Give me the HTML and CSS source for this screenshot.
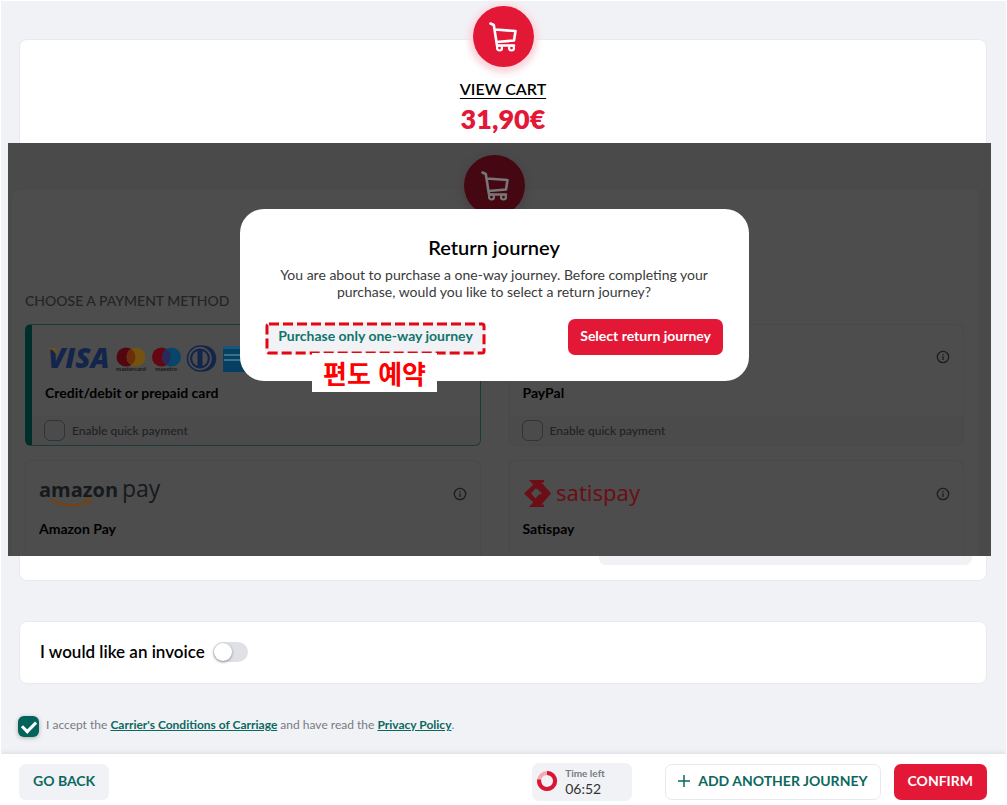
FILE: index.html
```html
<!DOCTYPE html>
<html lang="en">
<head>
<meta charset="utf-8">
<title>Payment</title>
<link rel="stylesheet" href="styles.css">
</head>
<body>
<svg class="defs" width="0" height="0" aria-hidden="true">
  <symbol id="cart" viewBox="0 0 28 30">
    <path d="M1.500 1.500 4.800 3 8 23.500H25M6 7.500 26.500 9 25 18.500 7.500 20" fill="none" stroke="currentColor" stroke-width="2.600" stroke-linecap="round" stroke-linejoin="round"/>
    <circle cx="10.500" cy="26" r="2.500" class="wheel" stroke="currentColor" stroke-width="2.200"/>
    <circle cx="22.500" cy="26" r="2.500" class="wheel" stroke="currentColor" stroke-width="2.200"/>
  </symbol>
  <symbol id="info" viewBox="0 0 14 14">
    <circle cx="7" cy="7" r="5.700" fill="none" stroke="currentColor" stroke-width="1.300"/>
    <path d="M7 6.200V10M7 4v1.200" stroke="currentColor" stroke-width="1.300"/>
  </symbol>
</svg>
<div class="page">
  <main class="content">
    <section class="card cart-card">
      <div class="cart-summary">
        <span class="cart-badge"><svg width="28" height="30"><use href="#cart"/></svg></span>
        <a class="view-cart" href="#">VIEW CART</a>
        <strong class="total">31,90€</strong>
      </div>
      <div class="dimmed">
        <div class="panel">
          <span class="cart-badge dim-badge"><svg width="28" height="30"><use href="#cart"/></svg></span>
          <h2 class="choose">CHOOSE A PAYMENT METHOD</h2>
          <div class="methods">
            <article class="method selected">
              <div class="logo-row">
                <svg class="logos" width="216" height="28" viewBox="0 0 216 28">
                  <text x="3" y="23" class="visa">VISA</text>
                  <path d="M2 3H11L13 10 10 8C8 5 6 4 2 4Z" fill="#6b501c"/>
                  <circle cx="81" cy="12" r="9.500" fill="#520612"/><circle cx="91" cy="12" r="9.500" fill="#75520f"/>
                  <path d="M86 4a9.500 9.500 0 0 1 0 16 9.500 9.500 0 0 1 0-16Z" fill="#6b2d0c"/>
                  <text x="86" y="26" class="tiny">mastercard</text>
                  <circle cx="116.500" cy="12" r="9.500" fill="#650713"/><circle cx="126.500" cy="12" r="9.500" fill="#07466a"/>
                  <path d="M121.500 4a9.500 9.500 0 0 1 0 16 9.500 9.500 0 0 1 0-16Z" fill="#292a5a"/>
                  <text x="121" y="26" class="tiny">maestro</text>
                  <path d="M157 .5C176 0 176 27 157 26.500Z" fill="#14254c"/>
                  <circle cx="155" cy="13.500" r="12.500" fill="#4d4d4d" stroke="#14254c" stroke-width="1.500"/>
                  <circle cx="155" cy="13.500" r="10" fill="#14254c"/><path d="M152.500 6v15a8 8 0 0 1 0-15Zm5 0v15a8 8 0 0 0 0-15Z" fill="#4d4d4d"/>
                  <path d="M178 1h26v26h-26z" fill="#073f63"/><path d="M178 1h26v3h-26z" fill="#175777"/><path d="M179 10h22m-22 5h22" stroke="#397187" stroke-width="2"/>
                </svg>
              </div>
              <h3>Credit/debit or prepaid card</h3>
              <label class="quick"><input type="checkbox">Enable quick payment</label>
            </article>
            <article class="method">
              <div class="logo-row"><svg class="info" width="14" height="14"><use href="#info"/></svg></div>
              <h3>PayPal</h3>
              <label class="quick"><input type="checkbox">Enable quick payment</label>
            </article>
            <article class="method cut">
              <div class="logo-row">
                <svg class="logos" width="124" height="32" viewBox="0 0 124 32">
                  <text x="0" y="19" class="amazon">amazon</text><text x="83" y="19" class="amazon-pay">pay</text>
                  <path d="M11 21C23 29 38 29 50 23" fill="none" stroke="#704413" stroke-width="2.500"/><path d="M45 21.500c3-1.500 6-1.500 6.500-.5s-.5 4-2.500 6" fill="none" stroke="#704413" stroke-width="1.500"/>
                </svg>
                <svg class="info" width="14" height="14"><use href="#info"/></svg>
              </div>
              <h3>Amazon Pay</h3>
            </article>
            <article class="method cut">
              <div class="logo-row">
                <svg class="logos" width="120" height="32" viewBox="0 0 120 32">
                  <path d="M6 2H21V4.500H18.500L28 15.500 18.500 26.500H21V29H6L11 23.500 19 15.500 11 7.500Z" fill="#6c0e16"/>
                  <path d="M10.500 6.500 1 15.500 10.500 24.500 18 17 15 14 12 17.500 9.500 15.500 14 10.500Z" fill="#6c0e16"/>
                  <path d="M12.500 10.500 17 15.500 12.500 20.500 8 15.500Z" fill="#4d4d4d"/>
                  <text x="33" y="23" class="satis">satispay</text>
                </svg>
                <svg class="info" width="14" height="14"><use href="#info"/></svg>
              </div>
              <h3>Satispay</h3>
            </article>
          </div>
        </div>
        <div class="dialog-layer">
          <div class="dialog" role="dialog" aria-labelledby="return-title">
            <h2 id="return-title">Return journey</h2>
            <p>You are about to purchase a one-way journey. Before completing your purchase, would you like to select a return journey?</p>
            <div class="dialog-actions">
              <div class="marked">
                <button class="one-way" type="button">Purchase only one-way journey</button>
                <svg class="marker" aria-hidden="true"><rect x="2" y="2" width="217" height="29" rx="2"/></svg>
                <span class="note" lang="ko">편도 예약</span>
              </div>
              <button class="primary select-return" type="button">Select return journey</button>
            </div>
          </div>
        </div>
      </div>
      <div class="total-strip"></div>
    </section>
    <section class="card invoice">
      <label for="invoice">I would like an invoice</label>
      <input id="invoice" class="switch" type="checkbox" role="switch">
    </section>
    <div class="terms">
      <input id="terms" type="checkbox" checked>
      <label for="terms">I accept the <a href="#">Carrier's Conditions of Carriage</a> and have read the <a href="#">Privacy Policy</a>.</label>
    </div>
  </main>
  <footer class="bar">
    <button class="back" type="button">GO BACK</button>
    <div class="timer">
      <svg width="22" height="22" viewBox="0 0 22 22"><circle cx="11" cy="11" r="8" fill="none" stroke="#f5a9b7" stroke-width="4"/><path d="M11 3A8 8 0 1 1 3.200 9.500" fill="none" stroke="#d91636" stroke-width="4"/></svg>
      <div><span class="time-label">Time left</span><span class="time">06:52</span></div>
    </div>
    <button class="add" type="button"><svg width="12" height="12" viewBox="0 0 12 12"><path d="M6 0v12M0 6h12" stroke="currentColor" stroke-width="1.500"/></svg>ADD ANOTHER JOURNEY</button>
    <button class="primary" type="button">CONFIRM</button>
  </footer>
</div>
</body>
</html>
```
FILE: styles.css
```css
* { box-sizing: border-box; }
body {
  margin: 0;
  background: #fff;
  color: #000;
  font-family: Lato, "Noto Sans CJK KR", sans-serif;
}
h2, h3, p { margin: 0; }
button { border: 0; font: inherit; cursor: pointer; }
.defs { display: block; position: absolute; }
.page {
  display: flex;
  flex-direction: column;
  min-height: 100vh;
  padding: 1px;
}
.content { flex: 1; padding: 38px 19px 16px 18px; background: #f1f2f6; }
.card { background: #fff; border: 1px solid #e9eaee; border-radius: 8px; }
.cart-summary {
  display: flex;
  flex-direction: column;
  align-items: center;
  padding-bottom: 6px;
}
.cart-badge {
  display: grid;
  place-items: center;
  width: 61px;
  height: 61px;
  margin-top: -34px;
  border-radius: 50%;
  background: #e31837;
  color: #fff;
  box-shadow: 0 2px 6px 4px #f9d5dc;
}
.wheel { fill: none; }
.view-cart {
  margin-top: 12px;
  color: #000;
  font-size: 16px;
  font-weight: 600;
  line-height: 20px;
  text-underline-offset: 3px;
}
.total { color: #e31837; font-size: 27px; font-weight: 800; line-height: 36px; margin-top: 2px; }

.dimmed {
  position: relative;
  margin: 0 -5px 0 -12px;
  padding: 47px 13px 0 4px;
  background: #4a4a4b;
  overflow: hidden;
}
.panel {
  display: flex;
  flex-direction: column;
  padding: 0 14px 0 13px;
  background: #4d4d4d;
  border-top-left-radius: 8px;
}
.dim-badge {
  align-self: center;
  margin-top: -35px;
  background: #450711;
  color: #777;
  box-shadow: 0 2px 6px 3px #4a4345;
}
.choose { margin-top: 75px; color: #232426; font-size: 14px; font-weight: 500; line-height: 20px; }
.methods {
  display: grid;
  grid-template-columns: 1fr 1fr;
  gap: 14px 28px;
  margin-top: 13px;
}
.method {
  display: flex;
  flex-direction: column;
  border: 1px solid #494949;
  border-radius: 6px;
}
.method h3 { padding: 0 13px; font-size: 14px; font-weight: 700; line-height: 20px; }
.selected { border-color: #173d3b; border-left: 7px solid #002f2b; }
.logo-row { display: flex; align-items: center; height: 58px; padding: 9px 13px 0; }
.logos { overflow: visible; }
.info { margin: -4px 0 0 auto; color: #1c1d1e; }
.cut { border-bottom: 0; border-radius: 6px 6px 0 0; padding-bottom: 17px; }
.cut .logo-row { padding-top: 7px; }
.cut .info { margin-top: 0; }
.quick {
  display: flex;
  align-items: center;
  gap: 7px;
  margin-top: 13px;
  padding: 0 12px 1px;
  height: 29px;
  border-radius: 0 0 6px 0;
  background: #4b4b4b;
  color: #202124;
  font-size: 12px;
  font-weight: 500;
}
.quick input {
  appearance: none;
  width: 21px;
  height: 21px;
  margin: 0;
  border: 1px solid #2f3439;
  border-radius: 6px;
}
.visa { font: italic 800 28px "Open Sans", sans-serif; fill: #14254c; }
.tiny { font: 700 6px Lato, sans-serif; fill: #1a1a1a; text-anchor: middle; }
.amazon { font: 700 20px "Open Sans", sans-serif; fill: #16191d; }
.amazon-pay { font: 400 23px "Open Sans", sans-serif; fill: #16191d; }
.satis { font: 400 22px "Noto Sans", sans-serif; fill: #6c0e16; }

.dialog-layer {
  position: absolute;
  top: 66px;
  left: 0;
  right: 10px;
  display: flex;
  justify-content: center;
}
.dialog {
  width: 509px;
  padding: 26px 26px 26px 25px;
  border-radius: 24px;
  background: #fff;
  text-align: center;
}
.dialog h2 { font-size: 20px; font-weight: 600; line-height: 24px; }
.dialog p { max-width: 430px; margin: 7px auto 0; color: #3a3a3a; font-size: 14px; line-height: 17px; }
.dialog-actions { display: flex; justify-content: space-between; align-items: flex-end; margin-top: 19px; }
.primary {
  height: 36px;
  padding: 0 14px 3px;
  border-radius: 7px;
  background: #e31837;
  color: #fff;
  font-size: 14px;
  font-weight: 700;
}
.select-return { padding: 0 12px 3px; }
.marked { position: relative; width: 221px; }
.one-way {
  display: block;
  width: 100%;
  height: 33px;
  padding: 0 0 6px;
  border-radius: 4px;
  background: #f1f2f6;
  color: #10756c;
  font-size: 14px;
  font-weight: 700;
}
.marker { position: absolute; inset: 0; width: 100%; height: 100%; }
.marker rect { fill: none; stroke: #e30613; stroke-width: 3; stroke-dasharray: 10 4; }
.note {
  position: absolute;
  top: 31px;
  left: 47px;
  width: 125px;
  background: #fff;
  color: #f00;
  font: 700 26px/39px "Noto Sans CJK KR", sans-serif;
}
.total-strip {
  width: 373px;
  height: 9px;
  margin: 0 14px 15px auto;
  border-radius: 0 0 7px 7px;
  background: #f1f2f6;
}
.invoice {
  display: flex;
  align-items: center;
  gap: 8px;
  margin-top: 40px;
  padding: 19px 20px 20px;
  font-size: 17px;
  font-weight: 600;
  line-height: 22px;
}
.switch {
  appearance: none;
  display: flex;
  align-items: center;
  width: 35px;
  height: 20px;
  margin: 0;
  border-radius: 10px;
  background: #dfe1e7;
}
.switch::before {
  content: "";
  width: 18px;
  height: 18px;
  margin-left: 1px;
  border-radius: 50%;
  background: #fff;
  box-shadow: 0 1px 3px #888;
}
.switch:checked { justify-content: flex-end; background: #00665e; }
.terms {
  display: flex;
  gap: 7px;
  margin: 32px 0 0 -1px;
  color: #777b82;
  font-size: 12px;
  line-height: 18px;
}
.terms a { color: #0b685f; font-weight: 700; }
.terms input {
  appearance: none;
  display: grid;
  place-items: center;
  width: 21px;
  height: 21px;
  margin: 0;
  border-radius: 6px;
  background: #00635c;
  box-shadow: 0 1px 4px #aaa;
}
.terms input:checked::before {
  content: "";
  width: 11px;
  height: 6px;
  margin-bottom: 3px;
  border: solid #fff;
  border-width: 0 0 3px 3px;
  transform: rotate(-45deg);
}
.bar {
  display: flex;
  align-items: center;
  padding: 9px 19px 3px 18px;
  background: #fff;
  box-shadow: 0 -1px 5px #d9dade;
  clip-path: inset(-8px 0 0 0);
}
.bar button { height: 36px; padding-bottom: 3px; font-size: 14px; font-weight: 700; border-radius: 7px; }
.bar .back { padding: 0 14px 3px; background: #f1f2f6; color: #0b685f; }
.timer {
  display: flex;
  align-items: center;
  gap: 7px;
  width: 100px;
  height: 38px;
  margin-left: auto;
  padding: 0 0 2px 4px;
  border-radius: 7px;
  background: #f1f2f6;
}
.time-label { display: block; color: #777b82; font-size: 10px; font-weight: 700; line-height: 14px; }
.time { display: block; color: #333; font-size: 14px; line-height: 17px; }
.bar .add {
  display: flex;
  align-items: center;
  gap: 8px;
  margin: 0 13px 0 33px;
  padding: 0 12px 3px;
  border: 1px solid #e9eaee;
  background: #fff;
  color: #0b685f;
}
```
